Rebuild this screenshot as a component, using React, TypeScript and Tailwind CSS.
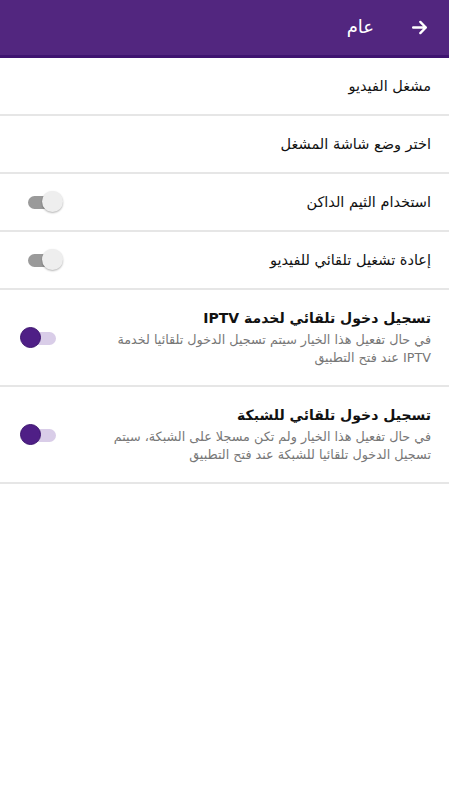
import React from "react";

const Toggle: React.FC<{ on: boolean }> = ({ on }) =>
  on ? (
    <div className="relative w-[36px] h-[22px] shrink-0">
      <div className="absolute left-[8px] top-[5px] w-[28px] h-[13px] rounded-full bg-[#d9cde8]" />
      <div className="absolute left-0 top-0 w-[21px] h-[21px] rounded-full bg-[#4f1f86] border border-[#3d1570]" />
    </div>
  ) : (
    <div className="relative w-[44px] h-[22px] shrink-0">
      <div className="absolute left-[8px] top-[5px] w-[28px] h-[13px] rounded-full bg-[#9a9a9a]" />
      <div className="absolute left-[22px] top-0 w-[21px] h-[21px] rounded-full bg-[#eeeeee] shadow-[0_1px_2px_rgba(0,0,0,0.3)]" />
    </div>
  );

type Row = { title: string; desc?: string[]; toggle?: boolean };

const rows: Row[] = [
  { title: "مشغل الفيديو" },
  { title: "اختر وضع شاشة المشغل" },
  { title: "استخدام الثيم الداكن", toggle: false },
  { title: "إعادة تشغيل تلقائي للفيديو", toggle: false },
  {
    title: "تسجيل دخول تلقائي لخدمة IPTV",
    desc: ["في حال تفعيل هذا الخيار سيتم تسجيل الدخول تلقائيا لخدمة", "IPTV عند فتح التطبيق"],
    toggle: true,
  },
  {
    title: "تسجيل دخول تلقائي للشبكة",
    desc: ["في حال تفعيل هذا الخيار ولم تكن مسجلا على الشبكة، سيتم", "تسجيل الدخول تلقائيا للشبكة عند فتح التطبيق"],
    toggle: true,
  },
];

export default function App() {
  return (
    <div
      dir="rtl"
      className="w-[449px] min-h-[800px] bg-white"
      style={{ fontFamily: '"DejaVu Sans", "Noto Sans", sans-serif' }}
    >
      <div className="h-[58px] bg-[#52267f] border-b-[3px] border-[#3f1470] flex items-center pr-[20px] gap-[36px] text-white">
        <svg width="19" height="19" viewBox="0 0 24 24" fill="none" stroke="white" strokeWidth="3" strokeLinecap="round" strokeLinejoin="round" className="scale-x-[-1]">
          <path d="M20 12H4M11 5l-7 7 7 7" />
        </svg>
        <span className="text-[18px] leading-none pb-[2px]">عام</span>
      </div>
      {rows.map((r, i) => (
        <div
          key={i}
          className={`flex items-center justify-between border-b-2 border-[#e6e6e6] pr-[18px] pl-[20px] ${r.desc ? "h-[97px]" : "h-[58px]"}`}
        >
          <div className="flex flex-col">
            <div className={`text-[14.5px] text-[#111] leading-[20px] ${r.desc ? "font-semibold text-[14px]" : "font-medium"}`}>{r.title}</div>
            {r.desc && (
              <div className="text-[12.75px] text-[#777] leading-[18px] mt-[3px] whitespace-nowrap">
                {r.desc.map((l, j) => (
                  <div key={j}>{l}</div>
                ))}
              </div>
            )}
          </div>
          {r.toggle !== undefined && <Toggle on={r.toggle} />}
        </div>
      ))}
    </div>
  );
}
